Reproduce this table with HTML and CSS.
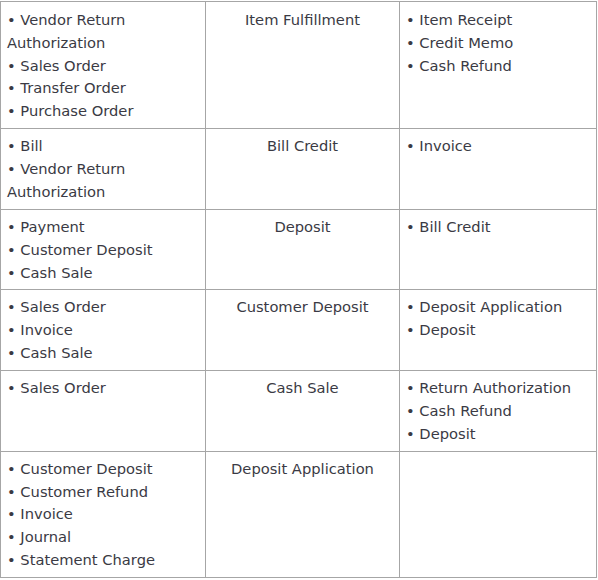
FILE: index.html
```html
<!DOCTYPE html>
<html>
<head>
<meta charset="utf-8">
<link rel="stylesheet" href="styles.css">
</head>
<body>
<table class="grid">
  <colgroup>
    <col class="c1"><col class="c2"><col class="c3">
  </colgroup>
  <tr class="lead">
    <td>• Vendor Return Authorization<br>• Sales Order<br>• Transfer Order<br>• Purchase Order</td>
    <td class="mid">Item Fulfillment</td>
    <td>• Item Receipt<br>• Credit Memo<br>• Cash Refund</td>
  </tr>
  <tr>
    <td>• Bill<br>• Vendor Return Authorization</td>
    <td class="mid">Bill Credit</td>
    <td>• Invoice</td>
  </tr>
  <tr>
    <td>• Payment<br>• Customer Deposit<br>• Cash Sale</td>
    <td class="mid">Deposit</td>
    <td>• Bill Credit</td>
  </tr>
  <tr>
    <td>• Sales Order<br>• Invoice<br>• Cash Sale</td>
    <td class="mid">Customer Deposit</td>
    <td>• Deposit Application<br>• Deposit</td>
  </tr>
  <tr>
    <td>• Sales Order</td>
    <td class="mid">Cash Sale</td>
    <td>• Return Authorization<br>• Cash Refund<br>• Deposit</td>
  </tr>
  <tr>
    <td>• Customer Deposit<br>• Customer Refund<br>• Invoice<br>• Journal<br>• Statement Charge</td>
    <td class="mid">Deposit Application</td>
    <td></td>
  </tr>
</table>
</body>
</html>
```
FILE: styles.css
```css
html, body {
  margin: 0;
  padding: 0;
  background: #ffffff;
}
body {
  padding-top: 1px;
  font-family: "DejaVu Sans", Verdana, sans-serif;
  font-size: 14.7px;
  line-height: 22.875px;
  color: #3a3a44;
}
.grid {
  border-collapse: collapse;
  table-layout: fixed;
  width: 596px;
}
.c1 { width: 205px; }
.c2 { width: 194px; }
.c3 { width: 197px; }
.grid td {
  border: 1px solid #a6a6a6;
  vertical-align: top;
  padding: 6px 6px 5px 6px;
}
.grid .lead td {
  padding-top: 6.75px;
}
.grid td.mid {
  text-align: center;
}
```
